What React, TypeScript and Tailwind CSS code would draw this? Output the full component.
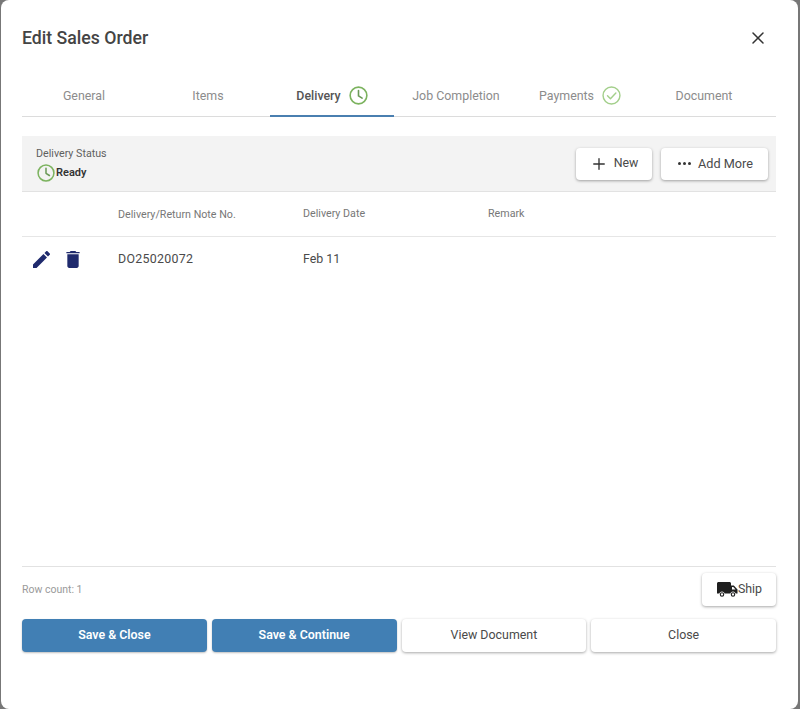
import { ReactNode } from "react";
import { Plus, X } from "lucide-react";

function ClockIcon({ size, stroke = "#7cb35f" }: { size: number; stroke?: string }) {
  return (
    <svg width={size} height={size} viewBox="0 0 20 20" fill="none" stroke={stroke} strokeWidth="1.7" className="shrink-0">
      <circle cx="10" cy="10" r="8.8" />
      <path d="M10 4.8V10.4L13.8 12.8" strokeLinecap="round" strokeLinejoin="round" stroke="#6b9a58" />
    </svg>
  );
}

function CheckIcon() {
  return (
    <svg width="19" height="19" viewBox="0 0 20 20" fill="none" stroke="#a3cf8b" strokeWidth="1.5" className="shrink-0">
      <circle cx="10" cy="10" r="8.9" />
      <path d="M5.8 10.2L8.9 13.3L14.6 7.3" strokeLinecap="round" strokeLinejoin="round" />
    </svg>
  );
}

function PencilIcon() {
  return (
    <svg width="17" height="17" viewBox="3 3 18 18" fill="#1f2a6d">
      <path d="M3 17.25V21h3.75L17.81 9.94l-3.75-3.75L3 17.25zM20.71 7.04a1 1 0 0 0 0-1.41l-2.34-2.34a1 1 0 0 0-1.41 0l-1.83 1.83 3.75 3.75 1.83-1.83z" />
    </svg>
  );
}

function TrashIcon() {
  return (
    <svg width="14" height="17" viewBox="5 3 14 18" fill="#1f2a6d">
      <path d="M6 19c0 1.1.9 2 2 2h8c1.1 0 2-.9 2-2V6.500H6v12.500zM19 4h-3.500l-1-1h-5l-1 1H5v1.500h14V4z" />
    </svg>
  );
}

function TruckIcon() {
  return (
    <svg width="21" height="15" viewBox="0 0 21 15" fill="#1f1f1f" className="shrink-0">
      <path d="M1.5 0H12.5C13.3 0 14 .7 14 1.500V3.500H16.800L20.500 7.400V11.500H18.600C18.300 10.300 17.200 9.500 16 9.500C14.800 9.500 13.700 10.300 13.400 11.500H7.600C7.300 10.300 6.200 9.500 5 9.500C3.800 9.500 2.700 10.300 2.400 11.500H0V1.500C0 .7.700 0 1.500 0Z" />
      <circle cx="5" cy="12.500" r="1.700" fill="white" stroke="#1f1f1f" strokeWidth="1.100" />
      <circle cx="16" cy="12.500" r="1.700" fill="white" stroke="#1f1f1f" strokeWidth="1.100" />
      <path d="M15 5H16.300L18.500 7.400H15Z" fill="white" />
    </svg>
  );
}

function Tab({ label, active, icon }: { label: string; active?: boolean; icon?: ReactNode }) {
  return (
    <div
      className={`relative flex h-[43px] w-[124px] items-center justify-center gap-[8px] pt-[2px] text-[12.400px] ${
        active ? "font-medium text-[#555]" : "text-[#8c8c8c]"
      }`}
    >
      <span className="pt-[1px]">{label}</span>
      {icon}
      {active && <div className="absolute inset-x-0 bottom-[-1px] h-[2px] bg-[#4a7fb0]" />}
    </div>
  );
}

function WhiteButton({ children, className }: { children: ReactNode; className: string }) {
  return (
    <button className={`flex items-center justify-center rounded bg-white text-[12.400px] text-[#4a4a4a] shadow-[0_1px_3px_rgba(0,0,0,0.35)] ${className}`}>
      {children}
    </button>
  );
}

export default function App() {
  return (
    <div className="h-[709px] w-[800px] overflow-hidden bg-[#777] pl-[1px] pr-[2px] font-['Roboto',sans-serif]">
      <div className="flex h-full flex-col rounded-lg bg-white pl-[21px] pr-[22px]">
        <div className="flex h-[73px] items-start justify-between pt-[27px]">
          <h1 className="text-[17.700px] font-medium leading-[22px] text-[#444]">Edit Sales Order</h1>
          <X size={20} strokeWidth={1.8} className="mr-[8px] mt-[1px] text-[#333]" />
        </div>

        <div className="flex border-b border-[#dcdcdc]">
          <Tab label="General" />
          <Tab label="Items" />
          <Tab label="Delivery" active icon={<ClockIcon size={19} />} />
          <Tab label="Job Completion" />
          <Tab label="Payments" icon={<CheckIcon />} />
          <Tab label="Document" />
        </div>

        <div className="mt-[19px] flex h-[56px] items-center justify-between border-b border-[#e2e2e2] bg-[#f3f3f3] pl-[14px] pr-[8px]">
          <div className="pt-[2px]">
            <div className="text-[10.700px] leading-[14px] text-[#5f5f5f]">Delivery Status</div>
            <div className="mt-[3px] flex items-center pl-[1px] text-[11px] font-semibold text-[#333]">
              <ClockIcon size={18} />
              <span className="ml-[1px]">Ready</span>
            </div>
          </div>
          <div className="flex gap-[9px]">
            <WhiteButton className="h-[32px] w-[76px] gap-[6px]">
              <Plus size={18} strokeWidth={1.8} className="text-[#333]" />
              New
            </WhiteButton>
            <WhiteButton className="h-[32px] w-[107px] gap-[7px] pl-[2px] text-[12.700px]">
              <span className="flex gap-[2px]">
                <i className="size-[3px] rounded-full bg-[#333]" />
                <i className="size-[3px] rounded-full bg-[#333]" />
                <i className="size-[3px] rounded-full bg-[#333]" />
              </span>
              Add More
            </WhiteButton>
          </div>
        </div>

        <div className="flex h-[45px] items-center border-b border-[#e6e6e6] text-[10.700px] text-[#777]">
          <div className="w-[96px]" />
          <div className="w-[185px] pt-[2px]">Delivery/Return Note No.</div>
          <div className="w-[185px]">Delivery Date</div>
          <div>Remark</div>
        </div>

        <div className="flex h-[44px] items-center text-[12.400px] text-[#4a4a4a]">
          <div className="flex w-[96px] items-center gap-[16px] pl-[11px]">
            <PencilIcon />
            <TrashIcon />
          </div>
          <div className="w-[185px] tracking-[0.3px]">DO25020072</div>
          <div className="w-[185px]">Feb 11</div>
        </div>

        <div className="flex-1" />

        <div className="flex h-[53px] items-start justify-between border-t border-[#e2e2e2] pt-[6px]">
          <span className="mt-[9px] text-[10.500px] text-[#9a9a9a]">Row count: 1</span>
          <WhiteButton className="h-[33px] w-[74px] gap-0 pl-[1px]">
            <TruckIcon />
            Ship
          </WhiteButton>
        </div>

        <div className="mb-[57px] grid grid-cols-4 gap-[5px]">
          <button className="h-[33px] rounded bg-[#417fb4] pb-[1px] text-[12.400px] font-semibold text-white shadow-[0_1px_2px_rgba(0,0,0,0.25)]">Save &amp; Close</button>
          <button className="h-[33px] rounded bg-[#417fb4] pb-[1px] text-[12.400px] font-semibold text-white shadow-[0_1px_2px_rgba(0,0,0,0.25)]">Save &amp; Continue</button>
          <WhiteButton className="h-[33px] pb-[1px]">View Document</WhiteButton>
          <WhiteButton className="h-[33px] pb-[1px]">Close</WhiteButton>
        </div>
      </div>
    </div>
  );
}
